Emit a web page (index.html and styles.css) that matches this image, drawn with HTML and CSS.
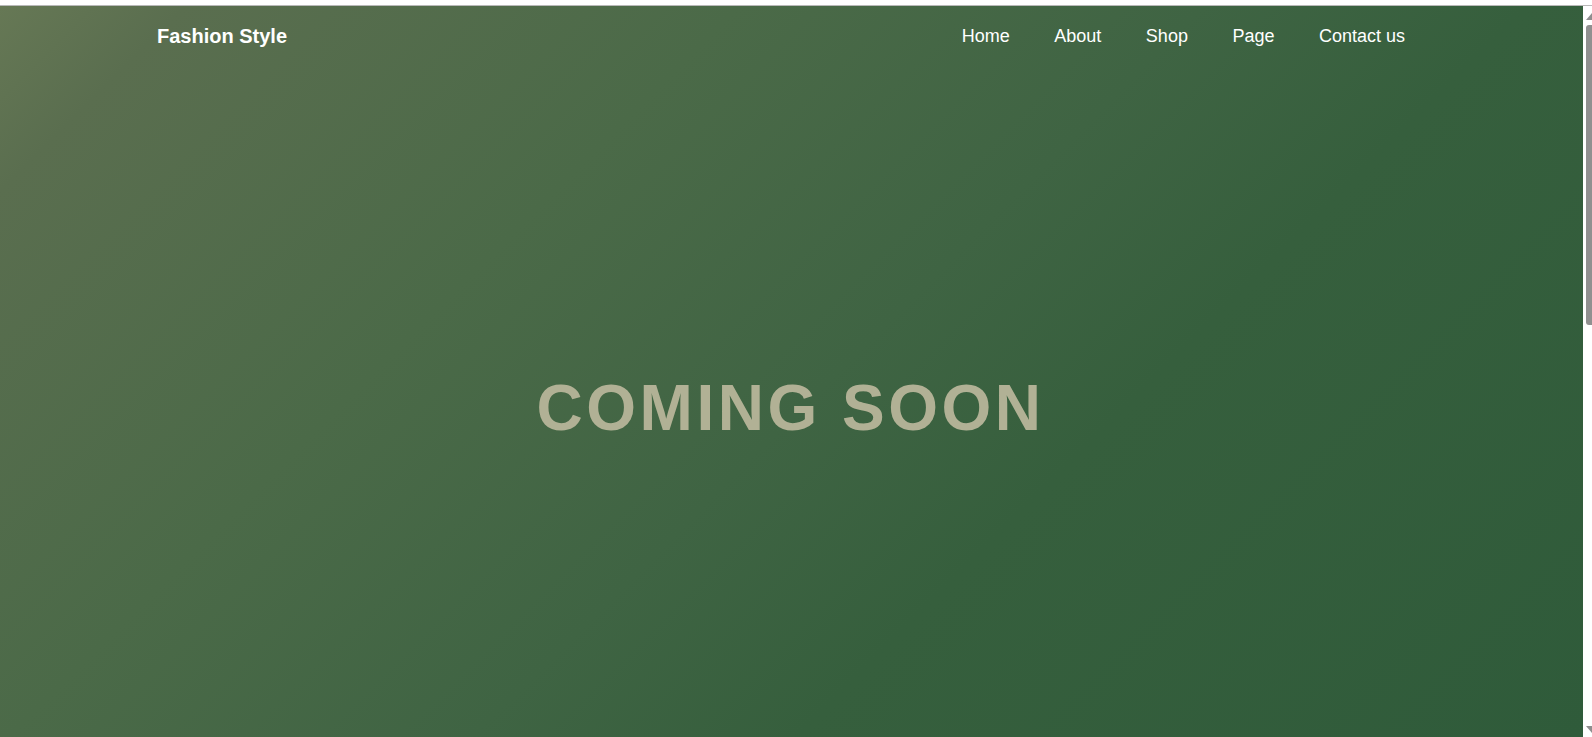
FILE: index.html
```html
<!DOCTYPE html>
<html lang="en">
<head>
<meta charset="utf-8">
<title>Fashion Style — Coming Soon</title>
<link rel="stylesheet" href="styles.css">
</head>
<body>
<div class="page">
  <div class="topstrip"></div>
  <div class="row">
    <section class="hero">
      <header class="header">
        <div class="logo">Fashion Style</div>
        <nav class="nav">
          <a href="#">Home</a>
          <a href="#">About</a>
          <a href="#">Shop</a>
          <a href="#">Page</a>
          <a href="#">Contact us</a>
        </nav>
      </header>
      <div class="content">
        <h1 class="title">COMING SOON</h1>
      </div>
    </section>
    <aside class="scrollbar">
      <svg class="arrow up" width="9" height="10" viewBox="0 0 9 10"><polygon points="3,8 9,1 9,8" fill="#8f8f8f"/></svg>
      <div class="thumb"></div>
      <div class="spacer"></div>
      <svg class="arrow down" width="9" height="8" viewBox="0 0 9 8"><polygon points="3,0 9,0 9,7" fill="#8f8f8f"/></svg>
    </aside>
  </div>
</div>
</body>
</html>
```

FILE: styles.css
```css
html, body {
  margin: 0;
  padding: 0;
  overflow: hidden;
}

body {
  font-family: "Liberation Sans", Arial, sans-serif;
  background: #ffffff;
}

.page {
  width: 1592px;
  height: 737px;
  display: flex;
  flex-direction: column;
}

.topstrip {
  height: 5px;
  background: #ffffff;
  border-bottom: 1px solid #b9b9b9;
  flex: none;
}

.row {
  flex: 1;
  display: flex;
  min-height: 0;
}

.hero {
  flex: 1;
  display: flex;
  flex-direction: column;
  background: linear-gradient(135deg, #667855 0%, #5a6e4f 8%, #4b6a48 32%, #3f6443 52%, #365f3d 66%, #2f5b3a 100%);
}

.header {
  display: flex;
  justify-content: space-between;
  align-items: flex-start;
  padding: 19px 178px 0 157px;
}

.logo {
  color: #ffffff;
  font-size: 20px;
  font-weight: bold;
  line-height: 23px;
}

.nav {
  display: flex;
  gap: 44.5px;
  margin-top: 1px;
}

.nav a {
  color: #ffffff;
  font-size: 18px;
  text-decoration: none;
  line-height: 21px;
}

.content {
  padding-top: 324px;
  display: flex;
  justify-content: center;
}

.title {
  margin: 0;
  font-size: 64px;
  font-weight: bold;
  letter-spacing: 3.5px;
  line-height: 73px;
  color: #b1b195;
  padding-right: 2px;
}

.scrollbar {
  width: 9px;
  flex: none;
  background: #ffffff;
  display: flex;
  flex-direction: column;
}

.arrow.up {
  margin-top: 6px;
}

.thumb {
  margin: 3px 0 0 3px;
  width: 6px;
  height: 300px;
  background: #909090;
  border-radius: 3px 0 0 3px;
}

.spacer {
  flex: 1;
}

.arrow.down {
  margin-bottom: 3px;
}
```
